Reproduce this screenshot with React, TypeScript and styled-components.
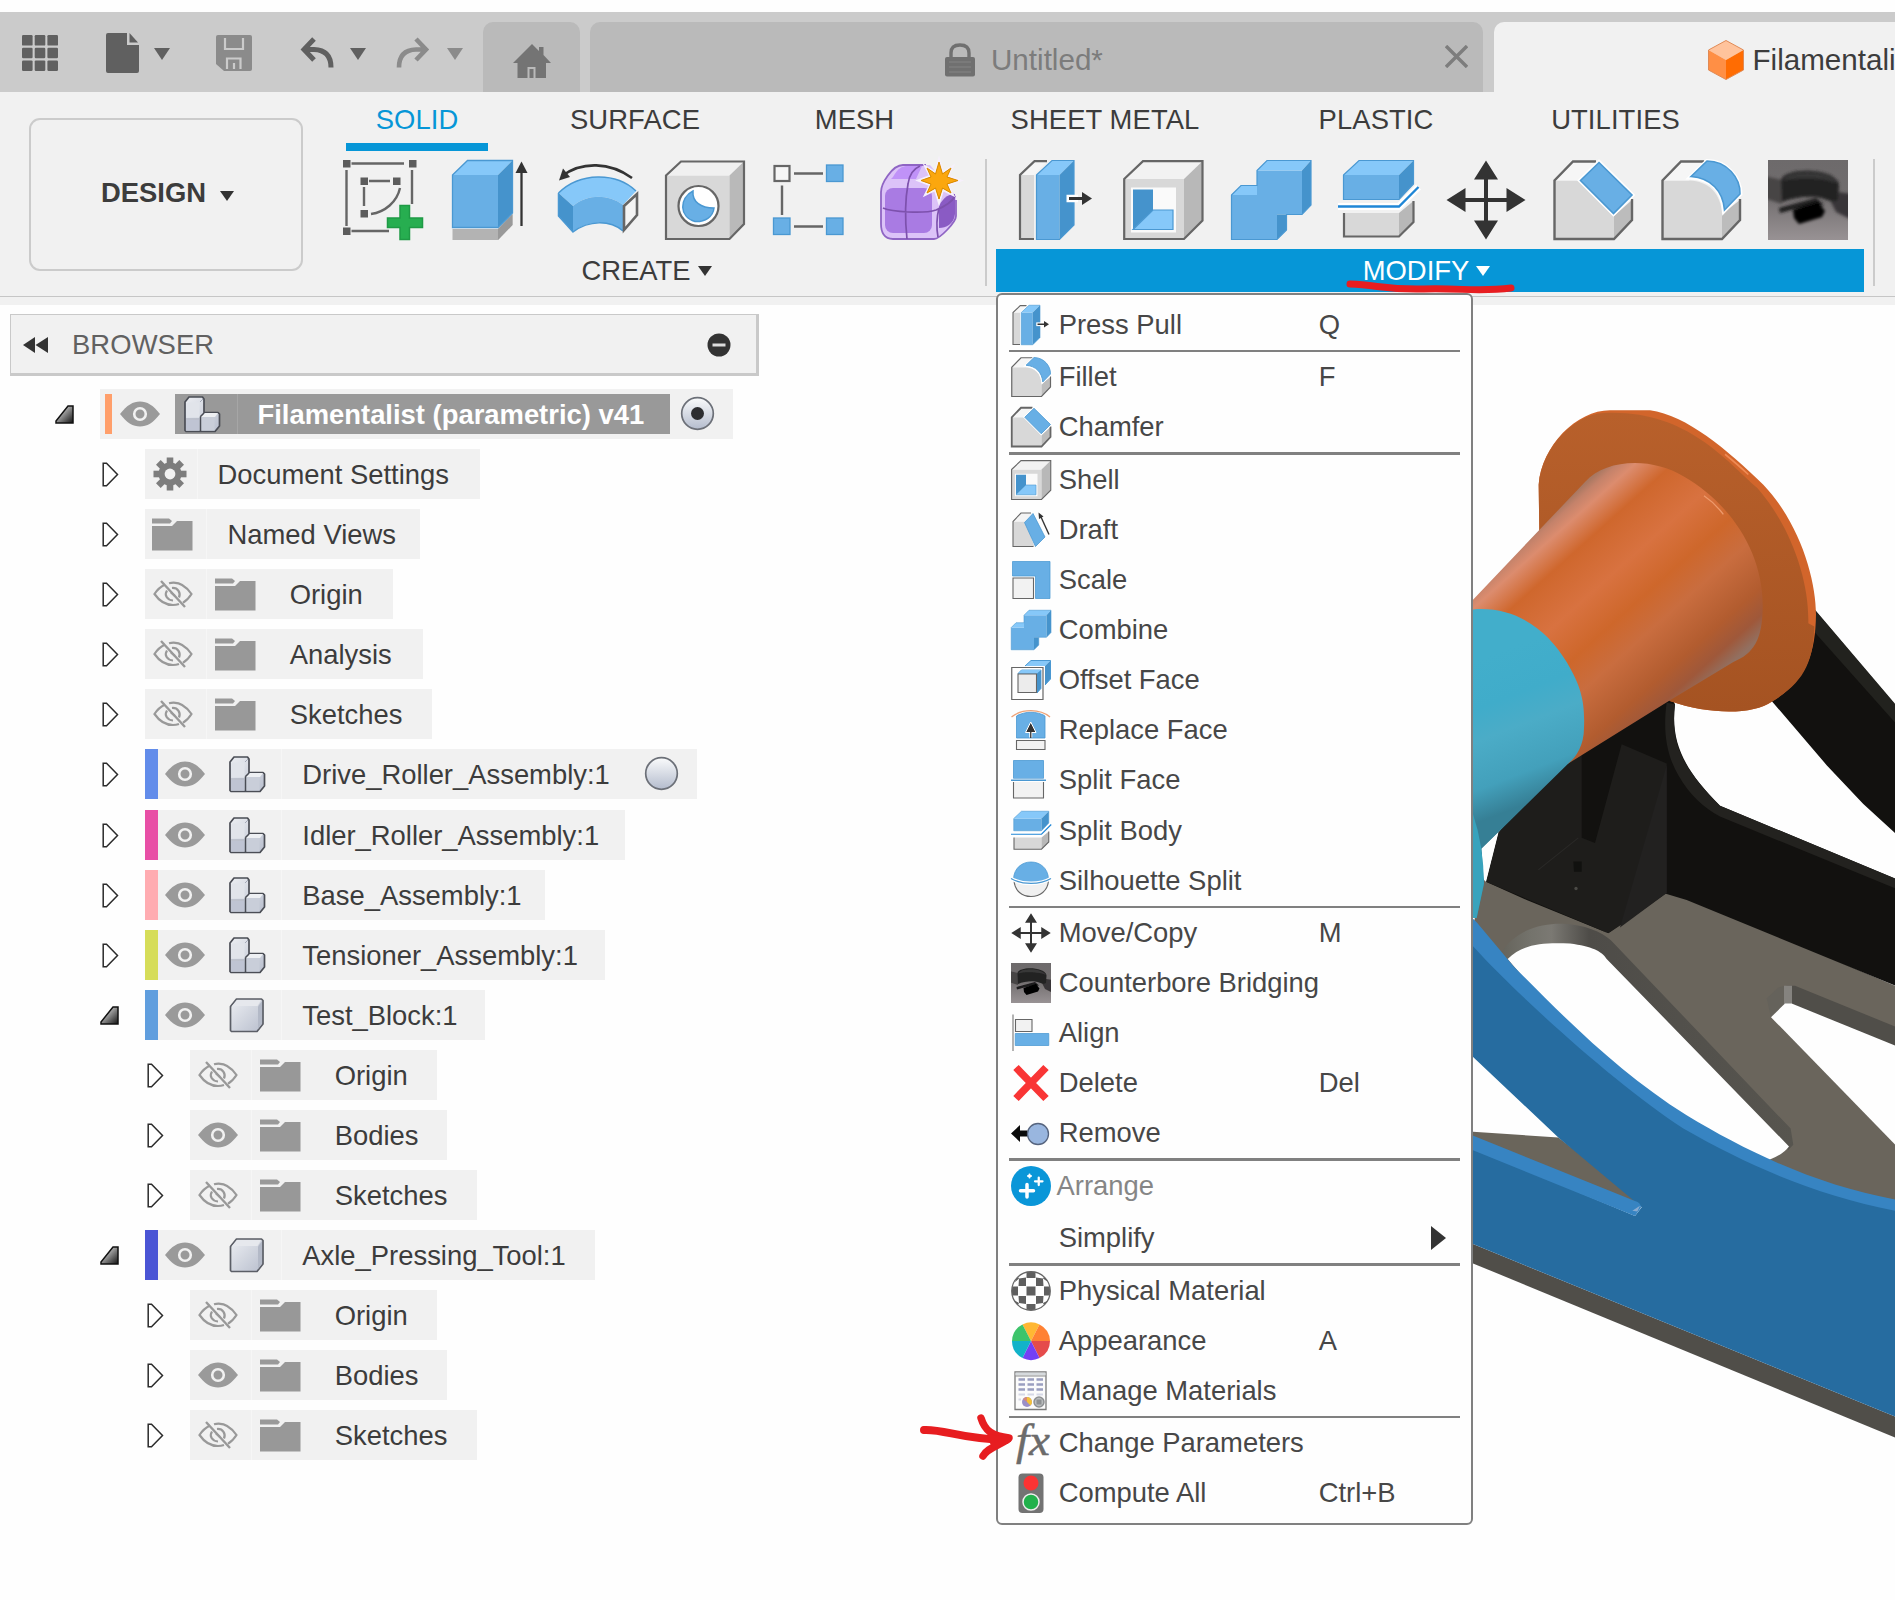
import React from "react";
import styled, { createGlobalStyle, css } from "styled-components";

const Global = createGlobalStyle`
  * { box-sizing: border-box; }
  body { margin: 0; background: #fff; overflow: hidden; }
`;

const Page = styled.div`
  position: relative;
  width: 1895px;
  height: 1600px;
  padding-top: 12px;
  overflow: hidden;
  background: #fefefe;
  color: #3c3c3c;
  font-family: "Liberation Sans", Arial, sans-serif;
  font-size: 27.4px;
  white-space: nowrap;
`;

/* ---------- title bar ---------- */

const TitleBar = styled.header`
  display: flex;
  height: 80px;
  background: #cbcbcb;
`;

const QuickTools = styled.div`
  display: flex;
  flex: none;
  align-items: center;
  width: 483px;
  padding: 1px 0 0 22px;
  svg { flex: none; display: block; }
`;

const Tool = styled.span<{ $ml?: number }>`
  display: flex;
  align-items: center;
  margin-left: ${(p) => p.$ml ?? 0}px;
`;

const Caret = styled.i<{ $w: number; $h: number; $c: string; $ml: number; $mt?: number }>`
  width: 0;
  height: 0;
  margin-left: ${(p) => p.$ml}px;
  margin-top: ${(p) => p.$mt ?? 0}px;
  border-left: ${(p) => p.$w / 2}px solid transparent;
  border-right: ${(p) => p.$w / 2}px solid transparent;
  border-top: ${(p) => p.$h}px solid ${(p) => p.$c};
`;

const DocTab = styled.div<{ $w?: number; $ml?: number; $pl?: number; $active?: boolean }>`
  display: flex;
  flex: none;
  align-items: center;
  width: ${(p) => p.$w}px;
  height: 70px;
  margin: 10px 0 0 ${(p) => p.$ml ?? 0}px;
  padding: 5px 0 0 ${(p) => p.$pl ?? 0}px;
  border-radius: 10px 10px 0 0;
  background: ${(p) => (p.$active ? "#f1f1f1" : "#bababa")};
  color: ${(p) => (p.$active ? "#3c3c3c" : "#7c7c7c")};
  font-size: 29.6px;
  svg { flex: none; display: block; }
`;

const DocTitle = styled.span<{ $ml: number }>`
  margin-left: ${(p) => p.$ml}px;
`;

const HomeSlot = styled.span`
  margin: 0 auto;
  padding-top: 2px;
`;

const DocClose = styled.span`
  margin: -6px 15px 0 auto;
`;

/* ---------- ribbon ---------- */

const Ribbon = styled.section`
  display: flex;
  height: 205px;
  background: #f1f1f1;
  border-bottom: 1px solid #c6c6c6;
`;

const RibbonEdge = styled.div`
  height: 8px;
  background: #f1f1f1;
`;

const WorkspaceButton = styled.button`
  display: flex;
  align-items: center;
  width: 274px;
  height: 153px;
  margin: 26px 0 0 29px;
  padding: 0 0 3px 70px;
  border: 2px solid #cbcbcb;
  border-radius: 11px;
  background: transparent;
  color: #3c3c3c;
  font: bold 27.4px "Liberation Sans", Arial, sans-serif;
`;

const RibbonMain = styled.div`
  flex: 1;
`;

const RibbonTabs = styled.nav`
  display: flex;
  gap: 56px;
  padding-left: 43px;
`;

const RibbonTab = styled.span<{ $w: number; $on?: boolean }>`
  width: ${(p) => p.$w}px;
  height: 59px;
  border-bottom: 8px solid ${(p) => (p.$on ? "#0696d7" : "transparent")};
  color: ${(p) => (p.$on ? "#0696d7" : "#3c3c3c")};
  line-height: 56px;
  text-align: center;
  letter-spacing: 0.1px;
`;

const Groups = styled.div`
  display: flex;
  padding: 8px 0 0 7px;
`;

const Group = styled.div<{ $w: number }>`
  width: ${(p) => p.$w}px;
`;

const IconRow = styled.div<{ $pl: number }>`
  display: flex;
  gap: 27.5px;
  height: 90px;
  padding: 0.7px 0 0 ${(p) => p.$pl}px;
  svg { flex: none; display: block; overflow: visible; }
`;

const GroupLabel = styled.div<{ $on?: boolean }>`
  display: flex;
  align-items: center;
  justify-content: center;
  height: 43px;
  padding-right: ${(p) => (p.$on ? 7 : 2)}px;
  ${(p) => p.$on && css`background: #0696d7; color: #fff;`}
`;

const GroupRule = styled.div<{ $ml: number }>`
  width: 2px;
  height: 127px;
  margin: 0 9px 0 ${(p) => p.$ml}px;
  background: #cbcbcb;
`;

/* ---------- browser tree ---------- */

const Body = styled.main`
  display: flex;
`;

const Browser = styled.aside`
  flex: none;
  width: 1473px;
  padding: 9px 0 0 10px;
`;

const BrowserHead = styled.div`
  display: flex;
  align-items: center;
  width: 749px;
  height: 62px;
  padding: 1px 25px 0 12px;
  border: 1px solid #c9c9c9;
  border-right-width: 3px;
  border-bottom-width: 3px;
  background: #f1f1f1;
  color: #616161;
  svg { display: block; }
`;

const BrowserTitle = styled.span`
  flex: 1;
  margin-left: 23px;
  letter-spacing: 0.1px;
`;

const Tree = styled.ul`
  display: flex;
  flex-direction: column;
  gap: 10px;
  margin: 13px 0 0;
  padding: 0;
  list-style: none;
`;

const TreeLine = styled.li<{ $indent: number; $extra?: number }>`
  display: flex;
  align-items: center;
  height: 50px;
  margin-top: ${(p) => p.$extra ?? 0}px;
  padding-left: ${(p) => p.$indent}px;
`;

const Twisty = styled.span<{ $w: number }>`
  display: flex;
  width: ${(p) => p.$w}px;
  svg { display: block; }
`;

const TreeItem = styled.div<{ $w: number }>`
  display: flex;
  align-items: center;
  width: ${(p) => p.$w}px;
  height: 50px;
  background: #f1f1f1;
  svg { flex: none; display: block; }
`;

const Swatch = styled.i<{ $c: string; $root?: boolean }>`
  flex: none;
  width: ${(p) => (p.$root ? 7 : 12.5)}px;
  height: ${(p) => (p.$root ? 40 : 50)}px;
  margin-left: ${(p) => (p.$root ? 5 : 0)}px;
  background: ${(p) => p.$c};
`;

const Cell = styled.span<{ $w: number; $pl?: number; $line?: boolean }>`
  display: flex;
  flex: none;
  align-items: center;
  width: ${(p) => p.$w}px;
  height: 50px;
  padding-left: ${(p) => p.$pl ?? 0}px;
  border-right: 1px solid ${(p) => (p.$line ? "#f6f6f6" : "transparent")};
`;

const ItemName = styled.span<{ $ml: number }>`
  margin-left: ${(p) => p.$ml}px;
  padding-top: 1px;
`;

const RootTitle = styled.span`
  display: flex;
  flex: none;
  align-items: center;
  width: 495px;
  height: 40px;
  margin: 0 10px 0 15px;
  background: #999;
  color: #fff;
  font-weight: bold;
  font-size: 27.4px;
`;

const RootIcon = styled.span`
  display: flex;
  align-items: center;
  width: 63px;
  height: 40px;
  padding-left: 9px;
  border-right: 1px solid #a6a6a6;
`;

const RadioSlot = styled.span`
  margin: 0 18px 0 auto;
`;

const Viewport = styled.div`
  flex: 1;
  padding-top: 85px;
  svg { display: block; }
`;

/* ---------- menu ---------- */

const Menu = styled.div`
  position: absolute;
  left: 996px;
  top: 293px;
  width: 477px;
  height: 1232px;
  padding: 5px 9px 0 11px;
  border: 2px solid #808080;
  border-radius: 6px;
  background: #fefefe;
  color: #474747;
`;

const MenuRow = styled.div<{ $h: number; $pt?: number; $off?: boolean }>`
  display: flex;
  align-items: center;
  height: ${(p) => p.$h}px;
  padding: ${(p) => p.$pt ?? 0}px 0 0 2px;
  color: ${(p) => (p.$off ? "#868686" : "inherit")};
  svg { flex: none; display: block; overflow: visible; }
`;

const MenuIcon = styled.span`
  flex: none;
  width: 40px;
  height: 40px;
`;

const MenuName = styled.span<{ $off?: boolean }>`
  width: ${(p) => (p.$off ? 262 : 260)}px;
  margin-left: ${(p) => (p.$off ? 5.5 : 7.7)}px;
  padding-top: 0.6px;
`;

const Shortcut = styled.span`
  flex: 1;
  padding-top: 0.6px;
`;

const SubArrow = styled.i`
  margin-left: 112px;
  border-left: 15px solid #333;
  border-top: 12.5px solid transparent;
  border-bottom: 12.5px solid transparent;
`;

const MenuRule = styled.hr<{ $h: number }>`
  height: ${(p) => p.$h}px;
  margin: 0 2px 0 0;
  border: 0;
  background: #808080;
`;

const Marks = styled.svg`
  position: absolute;
  left: 900px;
  top: 260px;
  pointer-events: none;
`;

/* ---------- icons ---------- */

const B1 = "#68afe5";
const B2 = "#86c8f9";
const B3 = "#4593cc";
const BE = "#4a98d2";
const G = "#666";

type IP = { s?: number };
const Box80 = ({ s = 80, children }: IP & { children?: React.ReactNode }) => (
  <svg width={s} height={s} viewBox="0 0 80 80" fill="none">
    {children}
  </svg>
);

const SketchIcon = () => (
  <Box80>
    <path d="M8 3.5H61M3.5 10V66M69 10V44M8 71H46M25 21H47M21 27V46M57 28C54 42 42 52 28 54" stroke={G} strokeWidth="2.4" />
    {[[0, 0], [65.5, 0], [0, 67.5], [17.5, 17.5], [50, 17.5], [17.5, 50]].map(([x, y]) => (
      <rect key={`${x}-${y}`} x={x - 1} y={y - 1} width="9.5" height="9.5" fill="#f1f1f1" />
    ))}
    {[[0, 0], [66, 0], [0, 67.5], [17.5, 17.5], [50, 17.5], [17.5, 50]].map(([x, y]) => (
      <rect key={`${x}.${y}`} x={x} y={y} width="7.5" height="7.5" fill="#5c5c5c" />
    ))}
    <path d="M57 45.5h9.500v12.500h13v9.500h-13v12h-9.500v-12h-12.500v-9.500h12.500z" fill="#27ae50" stroke="#1f9a45" strokeWidth="1.5" />
  </Box80>
);

const ExtrudeIcon = () => (
  <Box80>
    <path d="M2.500 69H48L62.500 54V65L48 80H2.500Z" fill="#b3b3b3" />
    <path d="M48 69L62.500 54V65L48 80Z" fill="#999" />
    <path d="M2.500 15H48V67.500H2.500Z" fill={B1} />
    <path d="M2.500 15L17.500 .5H62.500L48 15Z" fill={B2} />
    <path d="M48 15L62.500 .5V53L48 67.500Z" fill={B3} />
    <path d="M2.500 15L17.500 .5H62.500V53L48 67.500H2.500Z" stroke={BE} strokeWidth="1.300" />
    <path d="M71.500 66V10" stroke="#333" strokeWidth="2.300" />
    <path d="M71.500 1.500L65.500 13H77.500Z" fill="#333" />
  </Box80>
);

const RevolveIcon = () => (
  <Box80>
    <path d="M4 16C24 1 52 2 74 18" stroke="#333" strokeWidth="2.600" />
    <path d="M1 20.500L5 8.500L12 17Z" fill="#333" />
    <path d="M.5 33C22 12 58 12 78 31L65 45C50 34 30 34 15 46Z" fill={B2} />
    <path d="M15 46C30 34 50 34 65 45V71C52 60 31 60 15 72Z" fill={B1} />
    <path d="M.5 33L15 46V72L.5 56Z" fill={B3} />
    <path d="M.5 33C22 12 58 12 78 31M.5 33V56L15 72C31 60 52 60 65 71" stroke={BE} strokeWidth="1.500" />
    <path d="M66 46L79 34V55L66 70Z" fill="#f4f4f4" stroke={G} strokeWidth="2.600" />
  </Box80>
);

const HoleIcon = () => (
  <Box80>
    <path d="M1 15.500H64.500V79H1Z" fill="#d8d8d8" />
    <path d="M1 15.500L16 1.500H79L64.500 15.500Z" fill="#f0f0f0" />
    <path d="M64.500 15.500L79 1.500V64L64.500 79Z" fill="#b9b9b9" />
    <path d="M1 15.500L16 1.500H79V64L64.500 79H1Z" stroke={G} strokeWidth="2.200" />
    <circle cx="33.500" cy="46" r="20" fill="#fff" stroke={G} strokeWidth="2.200" />
    <path d="M28 31C14 38 14 57 30 61.500C40 62 48 57 49 48C36 48 27 42 28 31Z" fill={B1} stroke={BE} strokeWidth="1.500" />
  </Box80>
);

const PatternIcon = () => (
  <Box80>
    <path d="M21 13.500H50M9 25.500V55M21 66.500H50" stroke={G} strokeWidth="2.400" />
    <rect x="1.500" y="6" width="15" height="15" fill="#f6f6f6" stroke={G} strokeWidth="2.200" />
    <rect x="53.500" y="5" width="16.500" height="16.500" fill={B1} stroke={BE} strokeWidth="1.300" />
    <rect x=".5" y="58" width="16.500" height="16.500" fill={B1} stroke={BE} strokeWidth="1.300" />
    <rect x="53.500" y="58" width="16.500" height="16.500" fill={B1} stroke={BE} strokeWidth="1.300" />
  </Box80>
);

const FormIcon = () => (
  <Box80>
    <path d="M1 32C1 24 12 5 23 5H50L76 36V56C76 62 60 79 54 79H13C4 79 1 72 1 64Z" fill="#dcc3f8" />
    <path d="M13 17C18 8 22 6 28 6H42L36 19H11Z" fill="#c092f8" />
    <path d="M59 46C64 36 70 34 75 34V54C74 64 66 68 59 68Z" fill="#8a5bc4" />
    <rect x="5" y="28" width="47" height="45" rx="8" fill="#a97be3" />
    <path d="M1 32C1 24 12 5 23 5H46M76 40V56C76 62 60 79 54 79H13C4 79 1 72 1 64V32" stroke="#8f65c4" strokeWidth="1.800" />
    <path d="M3 48C12 52 44 54 56 50C66 46 72 42 75 36M27 79C25 60 25 40 28 24C29 16 33 9 40 6M58 77C56 66 57 56 59 48" stroke="#7d51ad" strokeWidth="1.700" />
    <path d="M59 -1L63 12L73 6L68 16L81 20.500L68 25L73 35L63 30L59 43L55 30L45 35L50 25L38 20.500L50 16L45 6L55 12Z" fill="#fba70e" stroke="#f6f0fb" strokeWidth="2" />
    <path d="M59 2L62.500 14L71 8L67 17L78 20.500L67 24L71 33L62.500 28L59 39L55.500 28L47 33L51 24L41 20.500L51 17L47 8L55.500 14Z" fill="#fba70e" stroke="#d98b00" strokeWidth="1" />
  </Box80>
);

const PressPullIcon = ({ s }: IP) => (
  <Box80 s={s}>
    <path d="M4 15H18V79H4Z" fill="#d8d8d8" />
    <path d="M4 15L18.500 1H31L18 15Z" fill="#f6f6f6" />
    <path d="M31 1.200H18.500L4 15V79H18" stroke={G} strokeWidth="2.200" />
    <path d="M20.500 15H43.500V79.500H20.500Z" fill={B1} />
    <path d="M20.500 15L36 .5H58L43.500 15Z" fill={B2} />
    <path d="M43.500 15L58 .5V65L43.500 79.500Z" fill={B3} />
    <path d="M20.500 15L36 .5H58V65L43.500 79.500H20.500Z" stroke={BE} strokeWidth="1.200" />
    <path d="M50.500 38.500H62" stroke="#fff" strokeWidth="7.500" />
    <path d="M53 38.500H67" stroke="#333" strokeWidth="3" />
    <path d="M66 32L76 38.500L66 45Z" fill="#333" />
  </Box80>
);

const ShellIcon = ({ s }: IP) => (
  <Box80 s={s}>
    <path d="M1 19H61V79H1Z" fill="#d8d8d8" />
    <path d="M1 19L20 1.200H79.500L61 19Z" fill="#f2f2f2" />
    <path d="M61 19L79.500 1.200V60.500L61 79Z" fill="#b8b8b8" />
    <path d="M1.200 19L20 1.200H79.500V60.500L61 79H1.200Z" stroke={G} strokeWidth="2.200" />
    <path d="M8 27.500H53V72.500H8Z" fill="#fafafa" />
    <path d="M10 29.500H30V50L10 69.500Z" fill={B3} />
    <path d="M10 69.500L30 50H50V69.500Z" fill={B2} stroke={BE} strokeWidth="1.200" />
  </Box80>
);

const CombineIcon = ({ s }: IP) => (
  <Box80 s={s}>
    <path d="M.5 35H26V10.500H71V54.500H46V79.500H.5Z" fill={B1} />
    <path d="M.5 35L10 25.500H26V35ZM26 10.500L36 .5H80L71 10.500Z" fill={B2} />
    <path d="M71 10.500L80 .5V45L71 54.500ZM46 54.500H55.500V70L46 79.500Z" fill={B3} />
    <path d="M.5 35L10 25.500H26V10.500L36 .5H80V45L71 54.500H55.500V70L46 79.500H.5Z" stroke={BE} strokeWidth="1.200" />
  </Box80>
);

const SplitBodyIcon = ({ s }: IP) => (
  <Box80 s={s}>
    <path d="M5.500 15H61V39.500H5.500Z" fill={B1} />
    <path d="M5.500 15L21 .5H75.500L61 15Z" fill={B2} />
    <path d="M61 15L75.500 .5V24L61 39.500Z" fill={B3} />
    <path d="M5.500 15L21 .5H75.500V24L61 39.500H5.500Z" stroke={BE} strokeWidth="1.200" />
    <path d="M0 46.500H61L80.500 27" stroke="#fff" strokeWidth="7" />
    <path d="M6 53H61V76.500H6Z" fill="#d8d8d8" />
    <path d="M61 53L75.500 41V62L61 76.500Z" fill="#b8b8b8" />
    <path d="M6 53V76.500H61L75.500 62V41" stroke={G} strokeWidth="2.200" />
    <path d="M0 46.500H61L80.500 27" stroke="#1f86d6" strokeWidth="2.300" />
  </Box80>
);

const MoveIcon = ({ s }: IP) => (
  <Box80 s={s}>
    <path d="M40 14V66M14 40H66" stroke="#333" strokeWidth="4" />
    <path d="M40 .5L28 19.500H52ZM40 79.500L28 60.500H52ZM.5 40L19.500 28V52ZM79.500 40L60.500 28V52Z" fill="#333" />
  </Box80>
);

const ChamferIcon = ({ s }: IP) => (
  <Box80 s={s}>
    <path d="M1.500 20.500H27L61 56V79H1.500Z" fill="#d8d8d8" />
    <path d="M1.500 20.500L20 1.500H43L26 20.500Z" fill="#f6f6f6" />
    <path d="M61 56L79 40V60L61 79Z" fill="#bcbcbc" />
    <path d="M43 1.500H20L1.500 20.500V79H61L79 60V39" stroke={G} strokeWidth={s ? 3.6 : 2.4} />
    <path d="M46 2L79.500 35L60.500 54L27 20.500Z" fill={B1} stroke="#fff" strokeWidth="4" />
    <path d="M46 2.500L79 35L60.500 53.500L27.500 20.500Z" fill={B1} stroke={BE} strokeWidth="1.600" />
  </Box80>
);

const FilletIcon = ({ s }: IP) => (
  <Box80 s={s}>
    <path d="M1.500 20.500H28C48 21 60 34 61 54V79H1.500Z" fill="#d8d8d8" />
    <path d="M1.500 20.500L20 1.500H43L28 20.500Z" fill="#f6f6f6" />
    <path d="M61 54L79 40V60L61 79Z" fill="#bcbcbc" />
    <path d="M43 1.500H20L1.500 20.500V79H61L79 60V39" stroke={G} strokeWidth="2.400" />
    <path d="M29 17.500L46 1C66 1 79.500 18 79.500 34L63 51C62 31 50 18 29 17.500Z" fill={B1} stroke="#fff" strokeWidth="4" />
    <path d="M30 16.500L46 1C66 1 79.500 18 79 34L63.500 50C62 31 50 18 30 16.500Z" fill={B1} stroke={BE} strokeWidth="1.600" />
  </Box80>
);

const BoreFrame = styled.svg`
  && { overflow: hidden; }
`;

const BoreIcon = ({ s = 80 }: IP) => (
  <BoreFrame width={s} height={s} viewBox="0 0 80 80">
    <defs>
      <linearGradient id={`bore${s}`} x1="0" y1="0" x2="0" y2="1">
        <stop offset="0" stopColor="#6d6a6b" />
        <stop offset=".45" stopColor="#716d6e" />
        <stop offset="1" stopColor="#989294" />
      </linearGradient>
      <filter id={`soft${s}`}><feGaussianBlur stdDeviation="1.500" /></filter>
    </defs>
    <rect width="80" height="80" fill={`url(#bore${s})`} />
    <g filter={`url(#soft${s})`}>
      <path d="M-4 16L14 20V44L-4 38Z" fill="#464445" />
      <path d="M84 34L70 32L60 36L68 52L84 60Z" fill="#383637" />
      <path d="M13 20C16 7 66 7 71 24L70 40C64 44 58 38 48 37C36 36 24 38 14 42Z" fill="#222" />
      <path d="M14 21C20 9 62 9 70 24C58 17 26 17 14 21Z" fill="#383738" />
      <path d="M11 48L48 38L56 45L30 48L12 53Z" fill="#1b1a1b" />
      <path d="M25 50L50 42L57 51L54 57L31 64L26 58Z" fill="#020202" />
    </g>
  </BoreFrame>
);

const DraftIcon = ({ s }: IP) => (
  <Box80 s={s}>
    <path d="M4 23H28L47 73H4Z" fill="#d8d8d8" />
    <path d="M4 23L20 6H42L28 23Z" fill="#f4f4f4" />
    <path d="M40 6H20L4 23V73H45" stroke={G} strokeWidth="2.200" />
    <path d="M27 25L44 7L68 54L49 73Z" fill={B1} stroke={BE} strokeWidth="1.600" />
    <path d="M76 49L60 14" stroke="#333" strokeWidth="2.800" />
    <path d="M55 5L65 13L56 18Z" fill="#333" />
  </Box80>
);

const ScaleIcon = ({ s }: IP) => (
  <Box80 s={s}>
    <path d="M3 3H78V77H49V32H3Z" fill={B1} stroke={BE} strokeWidth="1.500" />
    <path d="M4 36H45V77H4Z" fill="#f2f2f2" stroke={G} strokeWidth="2.200" />
  </Box80>
);

const OffsetFaceIcon = ({ s }: IP) => (
  <Box80 s={s}>
    <path d="M28 12L40 1H79L68 12Z" fill={B2} />
    <path d="M68 12L79 1V38L68 50Z" fill={B3} />
    <path d="M28 12L40 1H79V38L68 50" stroke={BE} strokeWidth="2" />
    <path d="M1.500 15H64V79H1.500Z" fill="#fff" stroke={G} strokeWidth="2.400" />
    <path d="M14 27L21 20H60V57L52 66V27Z" fill={B3} stroke={BE} strokeWidth="1.600" />
    <path d="M14 27L21 20H60L52 27Z" fill={B2} />
    <path d="M14 28H51V65H14Z" fill="#ececec" stroke={G} strokeWidth="2.200" />
  </Box80>
);

const ReplaceFaceIcon = ({ s }: IP) => (
  <Box80 s={s}>
    <path d="M1 14C22 -3 58 -3 78 14" stroke="#eda277" strokeWidth="2.600" />
    <path d="M11 12C28 2 52 2 68 12V56H11Z" fill={B1} stroke={BE} strokeWidth="1.600" />
    <path d="M11 61H68V79H11Z" fill="#f2f2f2" stroke={G} strokeWidth="2.200" />
    <path d="M39.500 55V38" stroke="#fff" strokeWidth="6" />
    <path d="M39.500 24L29 45H50Z" fill="#333" stroke="#fff" strokeWidth="2" />
    <path d="M39.500 56V40" stroke="#333" strokeWidth="2.600" />
  </Box80>
);

const SplitFaceIcon = ({ s }: IP) => (
  <Box80 s={s}>
    <path d="M5 1H65V37H5Z" fill={B1} stroke={BE} strokeWidth="1.600" />
    <path d="M5 42H65V76H5Z" fill="#f2f2f2" stroke={G} strokeWidth="2.200" />
    <path d="M0 40.500H70" stroke="#fff" strokeWidth="6.500" />
    <path d="M0 40.500H70" stroke="#4a98d2" strokeWidth="3" />
  </Box80>
);

const SilhouetteIcon = ({ s }: IP) => (
  <Box80 s={s}>
    <path d="M6 40C8 60 22 71 40 71S73 60 75 40Z" fill="#f0f0f0" stroke={G} strokeWidth="2.200" />
    <path d="M5 36C6 14 22 2 40 2S74 14 75 36C60 46 20 46 5 36Z" fill={B1} stroke={BE} strokeWidth="1.500" />
    <path d="M0 35C22 48 58 48 80 35" stroke="#fff" strokeWidth="7.500" />
    <path d="M0 35C22 48 58 48 80 35" stroke="#4a98d2" strokeWidth="2.800" />
  </Box80>
);

const AlignIcon = ({ s }: IP) => (
  <Box80 s={s}>
    <path d="M4 3V76" stroke="#8a8a8a" strokeWidth="2.600" />
    <path d="M9 13H42V37H9Z" fill="#f2f2f2" stroke={G} strokeWidth="2.200" />
    <path d="M8.500 41H75.500V65H8.500Z" fill={B1} stroke={BE} strokeWidth="1.500" />
  </Box80>
);

const DeleteIcon = ({ s }: IP) => (
  <Box80 s={s}>
    <path d="M10 9L70 71M70 9L10 71" stroke="#f93535" strokeWidth="15" />
  </Box80>
);

const RemoveIcon = ({ s }: IP) => (
  <Box80 s={s}>
    <path d="M0 41L18 24V35H33V47H18V58Z" fill="#0b0b0b" />
    <circle cx="54" cy="42" r="21" fill="#99b6df" stroke="#56647e" strokeWidth="2.600" />
  </Box80>
);

const ArrangeIcon = ({ s }: IP) => (
  <Box80 s={s}>
    <circle cx="40" cy="40" r="40" fill="#0a96d8" />
    <path d="M32 37V62M19 49.500H45" stroke="#fff" strokeWidth="7" strokeLinecap="round" />
    <path d="M55.500 23V38M48 30.500H63" stroke="#fff" strokeWidth="4.500" strokeLinecap="round" />
    <path d="M37 17V23M34 20H40" stroke="#fff" strokeWidth="4" strokeLinecap="round" />
  </Box80>
);

const MaterialIcon = ({ s }: IP) => (
  <Box80 s={s}>
    <clipPath id="ball"><circle cx="40" cy="40" r="38.500" /></clipPath>
    <circle cx="40" cy="40" r="38.500" fill="#fff" />
    <g clipPath="url(#ball)" fill="#5f5f5f">
      <path d="M31 0H49V14H31ZM31 31H49V49H31ZM31 66H49V80H31ZM0 31H14V49H0ZM66 31H80V49H66Z" />
      <path d="M16 15L30 13V30H15ZM50 13L64 15L65 30H50ZM15 50H30V66L16 64ZM50 50H65L64 64L50 66Z" />
      <path d="M12 8L16 15L8 22ZM68 8L64 15L74 22ZM12 72L16 64L6 58ZM68 72L64 64L76 58Z" />
    </g>
    <circle cx="40" cy="40" r="38.500" stroke="#666" strokeWidth="2.600" />
  </Box80>
);

const AppearanceIcon = ({ s }: IP) => (
  <Box80 s={s}>
    <path d="M40 40L23 7A38 38 0 0 1 57 7Z" fill="#ffb733" />
    <path d="M40 40L57 7A38 38 0 0 1 78 40Z" fill="#ff8133" />
    <path d="M40 40H78A38 38 0 0 1 57 74Z" fill="#e54b4b" />
    <path d="M40 40L57 74A38 38 0 0 1 23 74Z" fill="#7440f5" />
    <path d="M40 40L23 74A38 38 0 0 1 2 40Z" fill="#12b3c9" />
    <path d="M40 40H2A38 38 0 0 1 23 7Z" fill="#3dc46b" />
  </Box80>
);

const ManageIcon = ({ s }: IP) => (
  <Box80 s={s}>
    <path d="M8 2H70V77H8Z" fill="#fbfbfb" stroke="#7b7b7b" strokeWidth="2.600" />
    <path d="M9 3H69V9H9Z" fill="#d6dadd" />
    <path d="M8 10H70" stroke="#8c8c8c" strokeWidth="2" />
    <path d="M15 17H28M33 17H46M51 17H64M15 27H28M33 27H46M51 27H64M15 37H28M33 37H46M51 37H64" stroke="#9a9fc0" strokeWidth="5" />
    <path d="M15 47H28M33 47H46M51 47H64M15 57H20" stroke="#d5d8e6" strokeWidth="4" />
    <circle cx="32" cy="62" r="10" fill="#9a8fc8" />
    <path d="M32 62V52A10 10 0 0 1 39 69Z" fill="#f3c13a" />
    <path d="M32 62L24 56A10 10 0 0 1 32 52Z" fill="#d98a76" />
    <circle cx="56" cy="62" r="10" fill="#b9bcbd" stroke="#8d8f92" strokeWidth="3" />
    <path d="M51 57H61V67H51Z" fill="#8d9092" />
  </Box80>
);

const FxIcon = ({ s }: IP) => (
  <Box80 s={s}>
    <text x="10" y="63" fill="#6b6b6b" stroke="#6b6b6b" strokeWidth="1" fontFamily="'Liberation Serif', serif" fontStyle="italic" fontSize="90" textLength="68" lengthAdjust="spacingAndGlyphs">fx</text>
  </Box80>
);

const TrafficIcon = ({ s }: IP) => (
  <Box80 s={s}>
    <rect x="15" y="1" width="50" height="79" rx="8" fill="#737373" />
    <circle cx="40" cy="20" r="15" fill="#fb3333" />
    <circle cx="40" cy="58" r="16" fill="#22b14c" stroke="#efefef" strokeWidth="3" />
  </Box80>
);

/* tree icons */

const HiddenDefs = styled.svg`
  position: absolute;
`;

const Defs = () => (
  <HiddenDefs width="0" height="0">
    <defs>
      <linearGradient id="metal" x1="0" y1="0" x2="1" y2="1">
        <stop offset="0" stopColor="#eceef2" />
        <stop offset="1" stopColor="#b9bfce" />
      </linearGradient>
      <linearGradient id="knob" x1="0" y1="0" x2="0" y2="1">
        <stop offset="0" stopColor="#fafbfc" />
        <stop offset="1" stopColor="#b4bccd" />
      </linearGradient>
      <linearGradient id="tri" x1="0" y1="0" x2="1" y2="1">
        <stop offset=".3" stopColor="#bbb" />
        <stop offset="1" stopColor="#111" />
      </linearGradient>
    </defs>
  </HiddenDefs>
);

const Eye = () => (
  <svg width="40" height="26" viewBox="0 0 40 26">
    <path d="M0 13C7 4 13 .5 20 .5S33 4 40 13C33 22 27 25.500 20 25.500S7 22 0 13Z" fill="#9a9a9a" />
    <circle cx="20" cy="13" r="5.800" fill="#9a9a9a" stroke="#f1f1f1" strokeWidth="2.600" />
  </svg>
);

const EyeOff = () => (
  <svg width="40" height="28" viewBox="0 0 40 28" fill="none" stroke="#999" strokeWidth="2.200">
    <path d="M12 4.500C7 7 4 10 1.500 14C6 20.500 12 25 20 25C22 25 24 24.700 26 24M16 3.200C25 1 33 6 38.500 14C36 18 33 21 30 22.700" />
    <path d="M14 10.500C11 15 14 20 20 20.500M19 8C25 7.500 28 13 26 17.500M18 12.500L22 16" />
    <path d="M8 1L32 27" strokeWidth="2.400" />
  </svg>
);

const Folder = () => (
  <svg width="41" height="33" viewBox="0 0 41 33">
    <path d="M0 .5H17L20 3L18 5.500H0Z" fill="#999" />
    <path d="M0 8H20L25 3H40.500V32.500H0Z" fill="#989898" />
  </svg>
);

const Gear = () => (
  <svg width="34" height="34" viewBox="-17 -17 34 34">
    {[0, 45, 90, 135].map((a) => (
      <rect key={a} x="-3.300" y="-16.500" width="6.600" height="33" fill="#7d7d7d" transform={`rotate(${a})`} />
    ))}
    <circle r="11.500" fill="#7d7d7d" />
    <circle r="5.400" fill="#f1f1f1" />
  </svg>
);

const Assembly = () => (
  <svg width="37" height="37" viewBox="0 0 37 37" strokeLinejoin="round">
    <path d="M1 6L5 1H18.500L20 3V16.500H34L35.500 18V30L31 35.500H2L1 34.500Z" fill="url(#metal)" stroke="#4a4d55" strokeWidth="1.700" />
    <path d="M2.500 6.500H15.500V21.500H2.500Z" fill="#e1e4ea" />
    <path d="M2 24H15.500V34.500H2Z" fill="#bfc4d3" />
    <path d="M17.500 21H30.500V34.500H17.500Z" fill="#c9ced9" />
    <path d="M17 21L21 17H34L31 21Z" fill="#eef0f3" />
    <path d="M16.500 20.500V35M16.500 20.500L20 17" stroke="#4a4d55" strokeWidth="1.500" fill="none" />
    <path d="M2 23H16M16 6L19 3" stroke="#a3a8b6" strokeWidth="1" fill="none" />
  </svg>
);

const Block = () => (
  <svg width="36" height="35" viewBox="0 0 36 35" strokeLinejoin="round">
    <path d="M1.500 8.500L7.500 1H32.500L34 2.500V26L28 33.500H2.500L1.500 32.500Z" fill="url(#metal)" stroke="#5b5e66" strokeWidth="1.700" />
    <path d="M29 8.500L33 3V25.500L29 31Z" fill="#b3b9c7" />
    <path d="M3 8L8 2H32L28.500 8Z" fill="#e6e8ed" />
  </svg>
);

const Radio = ({ on }: { on?: boolean }) => (
  <svg width="35" height="36" viewBox="0 0 35 36">
    <circle cx="17.500" cy="17.500" r="15.800" fill="url(#knob)" stroke="#6c7078" strokeWidth="1.700" />
    {on && <circle cx="17.500" cy="17.500" r="6.500" fill="#2c2d30" />}
  </svg>
);

const Closed = () => (
  <svg width="17" height="25" viewBox="0 0 17 25">
    <path d="M1.200 1.200H4.500L15.500 12.500L4.500 23.800H1.200Z" fill="#fff" stroke="#2b2b2b" strokeWidth="1.500" />
  </svg>
);

const Open = () => (
  <svg width="19" height="19" viewBox="0 0 19 19">
    <path d="M1 18V16L13 1H18V18Z" fill="url(#tri)" stroke="#111" strokeWidth="1.500" />
  </svg>
);

/* ---------- model drawing ---------- */

const Model = () => (
  <svg width="422" height="1060" viewBox="1473 390 422 1060">
    <defs>
      <linearGradient id="cone" gradientUnits="userSpaceOnUse" x1="190" y1="414" x2="645" y2="931">
        <stop offset="0" stopColor="#a97862" />
        <stop offset=".03" stopColor="#c4826a" />
        <stop offset=".08" stopColor="#dc8c6e" />
        <stop offset=".19" stopColor="#cf672d" />
        <stop offset=".37" stopColor="#d87240" />
        <stop offset=".53" stopColor="#ce672b" />
        <stop offset=".66" stopColor="#c96d3f" />
        <stop offset=".84" stopColor="#b25c2f" />
        <stop offset=".93" stopColor="#9f583a" />
        <stop offset="1" stopColor="#927061" />
      </linearGradient>
      <linearGradient id="tube" gradientUnits="userSpaceOnUse" x1="20" y1="800" x2="180" y2="1220">
        <stop offset="0" stopColor="#42aecb" />
        <stop offset=".3" stopColor="#40acca" />
        <stop offset=".5" stopColor="#4bacc7" />
        <stop offset=".8" stopColor="#43a0bb" />
        <stop offset="1" stopColor="#367f95" />
      </linearGradient>
      <linearGradient id="flange" x1="0" y1="0" x2="0" y2="1">
        <stop offset="0" stopColor="#b8602b" />
        <stop offset="1" stopColor="#a55322" />
      </linearGradient>
      <linearGradient id="slot" x1="0" y1="0" x2="1" y2="0">
        <stop offset="0" stopColor="#66645c" />
        <stop offset=".1" stopColor="#74736c" />
        <stop offset=".17" stopColor="#7b7973" />
        <stop offset=".3" stopColor="#4e4c48" />
        <stop offset="1" stopColor="#57554f" />
      </linearGradient>
    </defs>

    <g transform="translate(1470 900) scale(.33333 .35714)">
      <path d="M10 70L40 -60L170 -20L415 93L550 -30L650 -10L1285 244V850L900 760L400 500L10 130Z" fill="#6a655c" />
      <path d="M95 145C150 68 250 62 300 68C365 75 410 98 432 122L962 640L970 685L955 700L410 180L115 175Z" fill="url(#slot)" />
      <path d="M113 165C160 122 220 119 300 122C365 130 395 143 410 165L957 690Q940 712 898 727L640 640L300 370Z" fill="#fefefe" />
      <path d="M903 328L915 262L950 240H975L1285 358V413L960 290Z" fill="#504e49" />
      <path d="M903 328L890 275L925 245L945 240V296Z" fill="#65625b" />
      <path d="M942 240H966V292H942Z" fill="#85837f" />
      <path d="M903 328L945 290H965L1285 411V694Z" fill="#fefefe" />
      <path d="M0 648L265 665L510 842L500 855L0 700Z" fill="#6a655b" />
      <path d="M0 960L1285 1450V1509L0 1014Z" fill="#504e49" />
      <path d="M0 115C150 270 440 513 640 635C850 747 1050 825 1285 868V1450L0 960V690L495 885L515 860L265 665L10 440L0 430Z" fill="#266ca0" />
      <path d="M0 655L10 660L495 843Q513 848 513 862L495 885L0 697Z" fill="#3784c2" />
      <path d="M487 870L510 856L502 872Z" fill="#8aabd0" />
      <path d="M0 45L20 62L130 185C300 345 450 485 650 603C830 705 1050 803 1285 840V872C1050 830 850 752 640 640C440 518 150 275 0 120Z" fill="#3784c2" />
    </g>

    <g transform="translate(1470 390) scale(.33333 .33801)">
      <path d="M1030 645L1038 655L1285 942V1320L1180 1225L1070 1110L905 920L990 820Z" fill="#12110f" />
      <path d="M1035 650L1285 940V995L1030 712Z" fill="#22221e" />
      <path d="M260 1080L85 1310L48 1455L170 1509L415 1607L480 1560L580 1488L650 1509L1285 1766V1449L750 1230C650 1130 600 1050 615 930L600 900Z" fill="#12110f" />
      <path d="M300 1090L335 1070V1325L375 1340L455 1048L590 1105V1488L480 1565L415 1607L48 1455L85 1310Z" fill="#1e1d1b" />
      <path d="M590 1110V1488L450 1590Z" fill="#222120" />
      <path d="M590 925C578 1010 590 1080 625 1140C660 1200 700 1235 750 1262L1285 1478V1449L750 1230C640 1120 600 1050 615 930Z" fill="#23221f" />
      <path d="M205 1420L325 1325" fill="none" stroke="#2a2927" strokeWidth="3" />
      <path d="M310 1395H335V1425H312Z" fill="#11110f" />
      <circle cx="318" cy="1475" r="5" fill="#4b4a46" />

      <path d="M208 420L206 280C215 165 320 60 420 60H540C650 75 770 175 880 280C990 395 1038 560 1038 665C1036 780 1010 860 905 922C850 960 720 962 600 920Z" fill="#d2652b" />
      <path d="M208 420L206 280C215 165 320 70 400 68C640 55 760 200 862 290C960 400 1018 560 1015 690L1033 700C1030 800 1005 865 905 922C850 960 720 962 600 920Z" fill="url(#flange)" />
      <path d="M0 630L345 272C410 200 550 200 640 255C790 340 880 490 878 640C878 740 850 780 790 805L600 918L295 1105L0 1200Z" fill="url(#cone)" />
      <path d="M702 313Q735 335 760 368" stroke="#ee9a6c" strokeWidth="4" fill="none" />
      <path d="M765 190Q805 222 835 250" stroke="#ef8a54" strokeWidth="5" fill="none" />
      <path d="M0 650C140 635 235 715 290 805C335 880 345 925 342 1000C342 1050 320 1085 295 1105L35 1357L42 1460L20 1562H0Z" fill="url(#tube)" />
      <path d="M35 1357L85 1310L48 1455L42 1450Z" fill="#fefefe" />
      <path d="M0 1230Q40 1330 42 1460L20 1562H0Z" fill="#38a3bd" />
    </g>
  </svg>
);

/* ---------- data ---------- */

type Node = {
  name: string;
  depth: 1 | 2;
  width: number;
  kind: "gear" | "views" | "folder" | "assembly" | "block";
  hidden?: boolean;
  color?: string;
  open?: boolean;
  radio?: boolean;
  extra?: number;
};

const nodes: Node[] = [
  { name: "Document Settings", depth: 1, width: 335, kind: "gear" },
  { name: "Named Views", depth: 1, width: 275, kind: "views" },
  { name: "Origin", depth: 1, width: 247.5, kind: "folder", hidden: true },
  { name: "Analysis", depth: 1, width: 277.5, kind: "folder", hidden: true },
  { name: "Sketches", depth: 1, width: 287, kind: "folder", hidden: true },
  { name: "Drive_Roller_Assembly:1", depth: 1, width: 552, kind: "assembly", color: "#628cea", radio: true },
  { name: "Idler_Roller_Assembly:1", depth: 1, width: 480, kind: "assembly", color: "#e84fa6", extra: 1 },
  { name: "Base_Assembly:1", depth: 1, width: 400, kind: "assembly", color: "#ffacb1" },
  { name: "Tensioner_Assembly:1", depth: 1, width: 460, kind: "assembly", color: "#d6dd59" },
  { name: "Test_Block:1", depth: 1, width: 340, kind: "block", color: "#609ede", open: true },
  { name: "Origin", depth: 2, width: 247, kind: "folder", hidden: true },
  { name: "Bodies", depth: 2, width: 257, kind: "folder" },
  { name: "Sketches", depth: 2, width: 287, kind: "folder", hidden: true },
  { name: "Axle_Pressing_Tool:1", depth: 1, width: 450, kind: "block", color: "#4a55d5", open: true },
  { name: "Origin", depth: 2, width: 247, kind: "folder", hidden: true },
  { name: "Bodies", depth: 2, width: 257, kind: "folder" },
  { name: "Sketches", depth: 2, width: 287, kind: "folder", hidden: true },
];

const TreeNode = ({ n }: { n: Node }) => (
  <TreeLine $indent={n.depth === 1 ? (n.open ? 90 : 92) : 137} $extra={n.extra}>
    <Twisty $w={n.open ? 45 : 43}>{n.open ? <Open /> : <Closed />}</Twisty>
    <TreeItem $w={n.width}>
      {n.kind === "gear" && (
        <>
          <Cell $w={53} $pl={7.5} $line><Gear /></Cell>
          <ItemName $ml={19.5}>{n.name}</ItemName>
        </>
      )}
      {n.kind === "views" && (
        <>
          <Cell $w={62} $pl={7} $line><Folder /></Cell>
          <ItemName $ml={20.5}>{n.name}</ItemName>
        </>
      )}
      {n.kind === "folder" && (
        <>
          <Cell $w={62} $pl={7.5} $line>{n.hidden ? <EyeOff /> : <Eye />}</Cell>
          <Cell $w={56} $pl={8}><Folder /></Cell>
          <ItemName $ml={26.7}>{n.name}</ItemName>
        </>
      )}
      {n.color && (
        <>
          <Swatch $c={n.color} />
          <Cell $w={55.5} $pl={7.5}><Eye /></Cell>
          <Cell $w={69} $pl={16} $line>{n.kind === "block" ? <Block /> : <Assembly />}</Cell>
          <ItemName $ml={20.3}>{n.name}</ItemName>
          {n.radio && <RadioSlot><Radio /></RadioSlot>}
        </>
      )}
    </TreeItem>
  </TreeLine>
);

type Entry =
  | { name: string; icon?: React.FC<IP>; key?: string; h?: number; pt?: number; off?: boolean; sub?: boolean }
  | { rule: number };

const entries: Entry[] = [
  { name: "Press Pull", icon: PressPullIcon, key: "Q" },
  { rule: 2 },
  { name: "Fillet", icon: FilletIcon, key: "F" },
  { name: "Chamfer", icon: ChamferIcon },
  { rule: 3 },
  { name: "Shell", icon: ShellIcon },
  { name: "Draft", icon: DraftIcon },
  { name: "Scale", icon: ScaleIcon },
  { name: "Combine", icon: CombineIcon },
  { name: "Offset Face", icon: OffsetFaceIcon },
  { name: "Replace Face", icon: ReplaceFaceIcon },
  { name: "Split Face", icon: SplitFaceIcon },
  { name: "Split Body", icon: SplitBodyIcon, h: 51 },
  { name: "Silhouette Split", icon: SilhouetteIcon },
  { rule: 2 },
  { name: "Move/Copy", icon: MoveIcon, key: "M" },
  { name: "Counterbore Bridging", icon: BoreIcon },
  { name: "Align", icon: AlignIcon },
  { name: "Delete", icon: DeleteIcon, key: "Del" },
  { name: "Remove", icon: RemoveIcon },
  { rule: 3 },
  { name: "Arrange", icon: ArrangeIcon, off: true },
  { name: "Simplify", sub: true, h: 52, pt: 2 },
  { rule: 3 },
  { name: "Physical Material", icon: MaterialIcon },
  { name: "Appearance", icon: AppearanceIcon, key: "A" },
  { name: "Manage Materials", icon: ManageIcon },
  { rule: 2 },
  { name: "Change Parameters", icon: FxIcon },
  { name: "Compute All", icon: TrafficIcon, key: "Ctrl+B" },
];

export default function App() {
  return (
    <Page>
      <Global />
      <Defs />
      <TitleBar>
        <QuickTools>
          <svg width="36" height="36" viewBox="0 0 36 36" fill="#606060">
            {[0, 12.7, 25.4].map((x) => [0, 12.7, 25.4].map((y) => <rect key={`${x}-${y}`} x={x} y={y} width="10.600" height="10.600" rx="1.200" />))}
          </svg>
          <Tool $ml={48}>
            <svg width="34" height="40" viewBox="0 0 34 40" fill="#606060">
              <path d="M2 0H21V12H33V38Q33 40 31 40H2Q0 40 0 38V2Q0 0 2 0Z" />
              <path d="M23.500 0L32 9.500H23.500Z" />
            </svg>
            <Caret $w={17} $h={12.5} $c="#606060" $ml={14} $mt={2} />
          </Tool>
          <Tool $ml={46}>
            <svg width="36" height="36" viewBox="0 0 36 36">
              <path d="M2 0H34Q36 0 36 2V34Q36 36 34 36H8L0 29V2Q0 0 2 0Z" fill="#8b8b8b" />
              <path d="M9 3V14H27V3M11 34V23.500H24.500V34M18 28V34" stroke="#cbcbcb" strokeWidth="2.200" fill="none" />
            </svg>
          </Tool>
          <Tool $ml={48}>
            <svg width="34" height="31" viewBox="0 0 34 31" fill="none" stroke="#606060" strokeWidth="5">
              <path d="M14 2L4 12.500L14 23M4 12.500H14Q31 13 31 30.500" />
            </svg>
            <Caret $w={17} $h={12.5} $c="#606060" $ml={15.5} $mt={2} />
          </Tool>
          <Tool $ml={30}>
            <svg width="34" height="31" viewBox="0 0 34 31" fill="none" stroke="#8b8b8b" strokeWidth="4.600">
              <path d="M20 2L30 12.500L20 23M30 12.500H20Q3 13 3 30.500" />
            </svg>
            <Caret $w={17} $h={12.5} $c="#8b8b8b" $ml={17} $mt={2} />
          </Tool>
        </QuickTools>
        <DocTab $w={97}>
          <HomeSlot>
            <svg width="38" height="34" viewBox="0 0 38 34" fill="#747474">
              <path d="M19 0L26 7V3H30.500V11L38 19H33V34H22.500V23H14.500V34H4.500V19H0Z" />
              <path d="M16.500 25H20.500V34H16.500Z" />
            </svg>
          </HomeSlot>
        </DocTab>
        <DocTab $w={893} $ml={10} $pl={354}>
          <svg width="32" height="34" viewBox="0 0 32 34">
            <path d="M7 15V10Q7 2 16 2T25 10V15" stroke="#707070" strokeWidth="3.400" fill="none" />
            <rect x="1" y="14" width="30" height="19.500" rx="2" fill="#707070" />
            <path d="M5 19H27M5 24H27M5 29H27" stroke="#7e7e7e" strokeWidth="1.500" />
          </svg>
          <DocTitle $ml={15}>Untitled*</DocTitle>
          <DocClose>
            <svg width="23" height="23" viewBox="0 0 23 23" stroke="#7d7d7d" strokeWidth="3.400">
              <path d="M1 1L22 22M22 1L1 22" />
            </svg>
          </DocClose>
        </DocTab>
        <DocTab $w={520} $ml={11} $pl={214} $active>
          <svg width="36" height="40" viewBox="0 0 36 40">
            <path d="M18 .5L35.500 10L18 20L.5 10Z" fill="#ffc39c" />
            <path d="M.5 10L18 20V39.500L.5 30Z" fill="#ff8f45" />
            <path d="M35.500 10L18 20V39.500L35.500 30Z" fill="#ff6c02" />
            <path d="M18 .5L35.500 10V30L18 39.500L.5 30V10Z" fill="none" stroke="#e08a55" strokeWidth="1" />
          </svg>
          <DocTitle $ml={8.5}>Filamentalist</DocTitle>
        </DocTab>
      </TitleBar>

      <Ribbon>
        <WorkspaceButton>
          DESIGN
          <Caret $w={15} $h={10} $c="#333" $ml={14} $mt={5} />
        </WorkspaceButton>
        <RibbonMain>
          <RibbonTabs>
            <RibbonTab $w={142} $on>SOLID</RibbonTab>
            <RibbonTab $w={182}>SURFACE</RibbonTab>
            <RibbonTab $w={145}>MESH</RibbonTab>
            <RibbonTab $w={244}>SHEET METAL</RibbonTab>
            <RibbonTab $w={186}>PLASTIC</RibbonTab>
            <RibbonTab $w={181}>UTILITIES</RibbonTab>
          </RibbonTabs>
          <Groups>
            <Group $w={675}>
              <IconRow $pl={32.5}>
                <SketchIcon /><ExtrudeIcon /><RevolveIcon /><HoleIcon /><PatternIcon /><FormIcon />
              </IconRow>
              <GroupLabel>
                CREATE
                <Caret $w={15} $h={10.5} $c="#333" $ml={7} />
              </GroupLabel>
            </Group>
            <GroupRule $ml={0} />
            <Group $w={868}>
              <IconRow $pl={19.5}>
                <PressPullIcon /><ShellIcon /><CombineIcon /><SplitBodyIcon />
                <MoveIcon /><ChamferIcon /><FilletIcon /><BoreIcon />
              </IconRow>
              <GroupLabel $on>
                MODIFY
                <Caret $w={15} $h={10.5} $c="#fff" $ml={7} />
              </GroupLabel>
            </Group>
            <GroupRule $ml={9} />
          </Groups>
        </RibbonMain>
      </Ribbon>
      <RibbonEdge />

      <Body>
        <Browser>
          <BrowserHead>
            <svg width="26" height="16" viewBox="0 0 26 16" fill="#333">
              <path d="M0 8L12 0V16ZM12.500 8L25 0V16Z" />
            </svg>
            <BrowserTitle>BROWSER</BrowserTitle>
            <svg width="24" height="24" viewBox="0 0 24 24">
              <circle cx="12" cy="12" r="11.500" fill="#333" />
              <path d="M5.500 12H18.500" stroke="#ddd" strokeWidth="3" />
            </svg>
          </BrowserHead>
          <Tree>
            <TreeLine $indent={45}>
              <Twisty $w={45}><Open /></Twisty>
              <TreeItem $w={632.5}>
                <Swatch $c="#ff9f6b" $root />
                <Cell $w={48} $pl={8}><Eye /></Cell>
                <RootTitle>
                  <RootIcon><Assembly /></RootIcon>
                  <ItemName $ml={19.5}>Filamentalist (parametric) v41</ItemName>
                </RootTitle>
                <Radio on />
              </TreeItem>
            </TreeLine>
            {nodes.map((n, i) => <TreeNode key={i} n={n} />)}
          </Tree>
        </Browser>
        <Viewport><Model /></Viewport>
      </Body>

      <Menu>
        {entries.map((e, i) =>
          "rule" in e ? (
            <MenuRule key={i} $h={e.rule} />
          ) : (
            <MenuRow key={i} $h={e.h ?? 50} $pt={e.pt} $off={e.off}>
              <MenuIcon>{e.icon && <e.icon s={40} />}</MenuIcon>
              <MenuName $off={e.off}>{e.name}</MenuName>
              {e.sub ? <SubArrow /> : <Shortcut>{e.key}</Shortcut>}
            </MenuRow>
          )
        )}
      </Menu>

      <Marks width="640" height="1220" viewBox="900 260 640 1220" fill="none" stroke="#e71d20" strokeLinecap="round" strokeLinejoin="round">
        <path d="M1350 284C1378 285 1386 290 1424 289S1480 292 1511 288" strokeWidth="7" />
        <path d="M924 1430C945 1429 960 1439 1006 1440" strokeWidth="8" />
        <path d="M981 1418C985 1431 992 1436 1009 1438C1000 1446 988 1447 983 1456" strokeWidth="7.500" />
        <path d="M990 1437L1009 1440L994 1446Z" fill="#e71d20" strokeWidth="5" />
      </Marks>
    </Page>
  );
}
